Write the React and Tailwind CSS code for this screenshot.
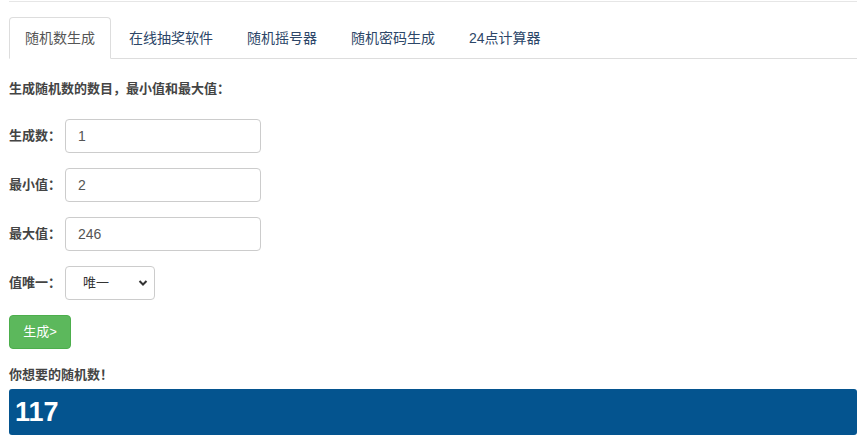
import { useState } from "react";

const tabs = ["随机数生成", "在线抽奖软件", "随机摇号器", "随机密码生成", "24点计算器"];

const fields = [
  { label: "生成数：", value: "1" },
  { label: "最小值：", value: "2" },
  { label: "最大值：", value: "246" },
];

export default function App() {
  const [active, setActive] = useState(0);

  return (
    <div className="w-[864px] h-[443px] bg-white text-[#333] font-['Liberation_Sans','Noto_Sans_CJK_SC',sans-serif] overflow-hidden">
      <div className="ml-[9px] w-[848px]">
        <div className="mt-px border-t border-[#e6e6e6]" />

        {/* tab bar */}
        <ul className="mt-[15px] flex border-b border-[#ddd]">
          {tabs.map((t, i) => (
            <li key={t} className="mr-[2px] -mb-px">
              <button
                onClick={() => setActive(i)}
                className={`h-[42px] px-[15px] text-[14px] leading-[20px] rounded-t-[4px] border ${
                  active === i
                    ? "bg-white border-[#ddd] border-b-white text-[#555]"
                    : "border-transparent text-[#2c4668]"
                }`}
              >
                {t}
              </button>
            </li>
          ))}
        </ul>

        {/* form */}
        <div className="pt-[22px]">
          <p className="text-[13px] font-bold text-[#444] leading-[16px]">
            生成随机数的数目，最小值和最大值：
          </p>

          <div className="mt-[22px] flex flex-col gap-[15px]">
            {fields.map((f) => (
              <div key={f.label} className="flex items-center">
                <span className="w-[56px] text-[13px] font-bold text-[#444]">{f.label}</span>
                <input
                  defaultValue={f.value}
                  className="w-[196px] h-[34px] px-[12px] text-[14px] text-[#555] border border-[#ccc] rounded-[4px] outline-none"
                />
              </div>
            ))}
            <div className="flex items-center">
              <span className="w-[56px] text-[13px] font-bold text-[#444]">值唯一：</span>
              <div className="relative w-[90px] h-[34px] border border-[#ccc] rounded-[4px] flex items-center">
                <span className="pl-[17px] text-[13px] text-[#333]">唯一</span>
                <svg
                  className="absolute right-[6px] top-[12px]"
                  width="10"
                  height="8"
                  viewBox="0 0 10 8"
                  fill="none"
                  stroke="#333"
                  strokeWidth="2"
                >
                  <path d="M1.5 2 L5 5.5 L8.5 2" />
                </svg>
              </div>
            </div>
          </div>

          <button className="mt-[15px] w-[62px] h-[34px] bg-[#5cb85c] text-white text-[13px] rounded-[4px] border border-[#4cae4c]">
            生成&gt;
          </button>

          <p className="mt-[18px] text-[13px] font-bold text-[#444] leading-[16px]">你想要的随机数！</p>

          <div className="mt-[6px] h-[46px] bg-[#04548f] rounded-[3px] flex items-center px-[6px]">
            <span className="text-white font-bold text-[27px] leading-none">117</span>
          </div>
        </div>
      </div>
    </div>
  );
}
